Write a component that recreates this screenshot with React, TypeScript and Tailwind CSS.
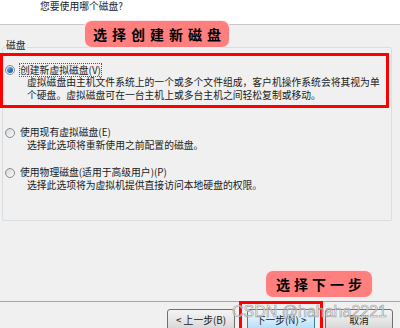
import React from 'react';

// Windows 7 风格的单选按钮
const Radio: React.FC<{ checked?: boolean }> = ({ checked }) => (
  <span className="relative flex h-[10px] w-[10px] shrink-0 items-center justify-center rounded-full border border-[#8a8c8e] bg-gradient-to-br from-[#d6d6d6] to-[#fbfbfb]">
    {checked && (
      <span className="h-[6px] w-[6px] rounded-full bg-gradient-to-br from-[#8fd0ff] via-[#2d7fd3] to-[#14508e]" />
    )}
  </span>
);

const options = [
  {
    key: 'new',
    label: '创建新虚拟磁盘(V)',
    desc: ['虚拟磁盘由主机文件系统上的一个或多个文件组成，客户机操作系统会将其视为单', '个硬盘。虚拟磁盘可在一台主机上或多台主机之间轻松复制或移动。'],
    checked: true,
  },
  {
    key: 'existing',
    label: '使用现有虚拟磁盘(E)',
    desc: ['选择此选项将重新使用之前配置的磁盘。'],
  },
  {
    key: 'physical',
    label: '使用物理磁盘(适用于高级用户)(P)',
    desc: ['选择此选项将为虚拟机提供直接访问本地硬盘的权限。'],
  },
];

export default function App() {
  return (
    <div className="relative h-[328px] w-[400px] overflow-hidden bg-[#f0f0f0] font-['Noto_Sans_CJK_SC','Noto_Sans',sans-serif] text-[9.8px] leading-[13px] text-[#1a1a1a]">
      {/* 顶部说明 */}
      <div className="h-[25px] border-b border-[#c9c9c9] bg-white pl-[40px] leading-[12px]">您要使用哪个磁盘?</div>

      <div className="pl-[2px] pr-[8px] pt-[14px]">
        <div className="relative z-10 ml-[3px] w-fit bg-[#f0f0f0] px-[1px] leading-[12px]">磁盘</div>

        {/* 磁盘分组框 */}
        <div className="-mt-[4px] rounded-[2px] border border-[#d9dee2] pb-[28px] pl-[2px] pt-[15px]">
          {options.map((o, i) => (
            <div key={o.key} className={i === 1 ? 'mt-[24px]' : i === 2 ? 'mt-[14px]' : ''}>
              <div className={`flex h-[13px] items-center ${o.checked ? 'gap-[4px]' : 'gap-[5px]'}`}>
                <Radio checked={o.checked} />
                {o.checked ? (
                  <span className="border border-dotted border-[#555] leading-[12px]">{o.label}</span>
                ) : (
                  <span>{o.label}</span>
                )}
              </div>
              <div className="pl-[22px]">
                {o.desc.map((d) => (
                  <div key={d} className="whitespace-nowrap">{d}</div>
                ))}
              </div>
            </div>
          ))}
        </div>
      </div>

      {/* 底部按钮 */}
      <div className="mt-[80px] h-px bg-[#a5a5a5]" />
      <div className="flex justify-end pr-[7px] pt-[7px]">
        <button className="h-[23px] w-[68px] rounded-[3px] border border-[#707070] bg-gradient-to-b from-[#f4f4f4] via-[#e6e6e6] to-[#d2d2d2] text-[9.8px]">
          &lt; 上一步(B)
        </button>
        <button className="ml-[12px] h-[23px] w-[68px] rounded-[3px] border border-[#3c7fb1] bg-gradient-to-b from-[#eaf6fd] via-[#d3ecfb] to-[#a9dbf6] text-[9.8px]">
          下一步(N) &gt;
        </button>
        <button className="ml-[10px] h-[23px] w-[68px] rounded-[3px] border border-[#707070] bg-gradient-to-b from-[#f4f4f4] via-[#e6e6e6] to-[#d2d2d2] text-[9.8px]">
          取消
        </button>
      </div>

      {/* 标注 */}
      <div className="absolute left-0 top-[53px] h-[55px] w-[389px] border-[3px] border-[#ff0000]" />
      <div className="absolute left-[239px] top-[301px] h-[32px] w-[84px] border-[3px] border-[#ff0000]" />

      <div className="absolute left-[84px] top-[20px] flex h-[28px] w-[146px] items-center justify-center rounded-[8px] border border-white/80 bg-[#ff7f7f] pl-[5px] text-[14px] font-bold tracking-[5px] text-black">
        选择创建新磁盘
      </div>
      <div className="absolute left-[265px] top-[270px] flex h-[28px] w-[108px] items-center justify-center rounded-[8px] border border-white/80 bg-[#ff7f7f] pl-[4px] text-[14px] font-bold tracking-[4px] text-black">
        选择下一步
      </div>

      <div className="absolute left-[232px] top-[304px] whitespace-nowrap font-['Liberation_Sans',sans-serif] text-[16px] leading-[16px] text-white/60 [-webkit-text-stroke:0.6px_#9a9a9a]">
        CSDN @hahaha2221
      </div>
    </div>
  );
}
